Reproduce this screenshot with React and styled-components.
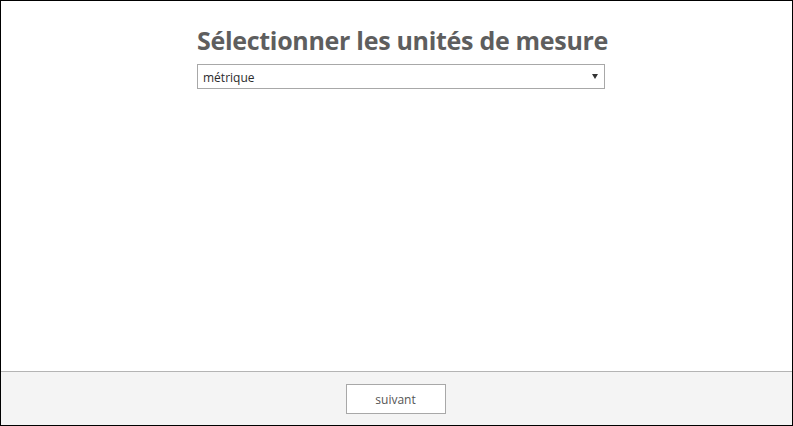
import React from "react";
import styled, { createGlobalStyle } from "styled-components";

const Global = createGlobalStyle`
  html, body { margin: 0; padding: 0; background: #fff; }
  body { font-family: "Open Sans", "Noto Sans", sans-serif; }
  * { box-sizing: border-box; }
`;

const Frame = styled.div`
  width: 793px;
  height: 426px;
  border: 1px solid #000;
  display: flex;
  flex-direction: column;
  background: #fff;
`;

const Main = styled.main`
  flex: 1;
  display: flex;
  justify-content: center;
  padding: 20px 0 0 9px;
`;

const Column = styled.div`
  width: 408px;
  display: flex;
  flex-direction: column;
  align-items: stretch;
`;

const Title = styled.h1`
  margin: 0;
  font-family: "Open Sans", sans-serif;
  font-weight: 700;
  font-size: 25px;
  line-height: 38px;
  letter-spacing: -0.3px;
  color: #5e5e5e;
  text-align: center;
  white-space: nowrap;
`;

const Select = styled.div`
  margin-top: 5px;
  height: 25px;
  border: 1px solid #a8a8a8;
  display: flex;
  align-items: center;
  justify-content: space-between;
  padding: 2px 6px 0 5px;
  font-size: 12px;
  color: #2b2b2b;
  background: #fff;
`;

const Caret = styled.span`
  width: 0;
  height: 0;
  border-left: 3.5px solid transparent;
  border-right: 3.5px solid transparent;
  border-top: 5px solid #333;
  margin-top: -2px;
`;

const Footer = styled.footer`
  height: 54px;
  border-top: 1px solid #b4b4b4;
  background: #f4f4f4;
  display: flex;
  justify-content: center;
  align-items: flex-start;
  padding: 12px 2px 0 0;
`;

const Button = styled.button`
  width: 100px;
  height: 30px;
  border: 1px solid #a8a8a8;
  background: #fff;
  font-family: "Open Sans", sans-serif;
  font-size: 12px;
  color: #555;
  padding: 0;
  cursor: pointer;
`;

export default function App() {
  return (
    <>
      <Global />
      <Frame>
        <Main>
          <Column>
            <Title>Sélectionner les unités de mesure</Title>
            <Select>
              <span>métrique</span>
              <Caret />
            </Select>
          </Column>
        </Main>
        <Footer>
          <Button>suivant</Button>
        </Footer>
      </Frame>
    </>
  );
}
